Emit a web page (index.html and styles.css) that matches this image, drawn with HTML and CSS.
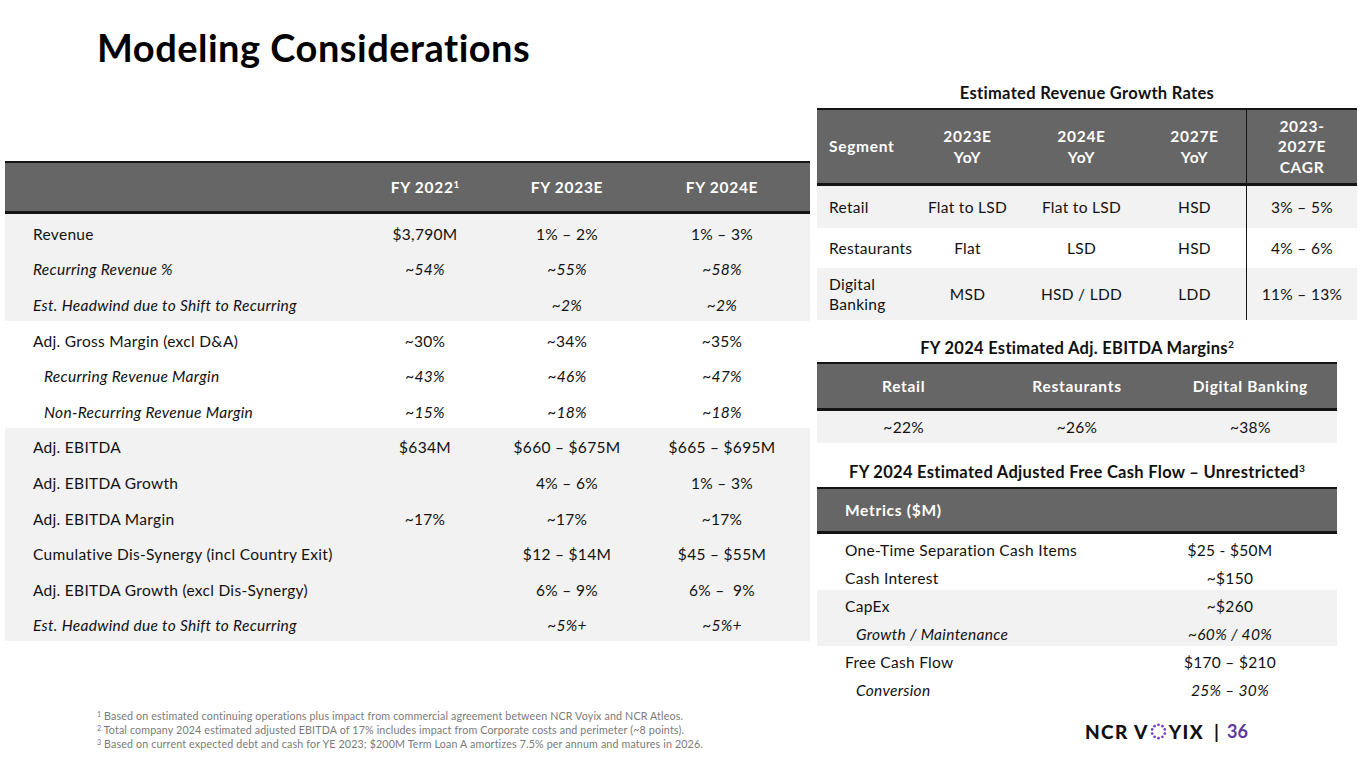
FILE: index.html
```html
<!DOCTYPE html>
<html lang="en">
<head>
<meta charset="utf-8">
<title>Modeling Considerations</title>
<link rel="stylesheet" href="styles.css">
</head>
<body>
<div class="slide">
  <h1 class="title">Modeling Considerations</h1>
  <div class="content">
    <div class="left">
      <table class="main">
        <colgroup><col class="c-label"><col class="c1"><col class="c2"><col class="c3"></colgroup>
        <thead>
          <tr><th></th><th>FY 2022<sup>1</sup></th><th>FY 2023E</th><th>FY 2024E</th></tr>
        </thead>
        <tbody>
          <tr class="g"><td class="lab">Revenue</td><td>$3,790M</td><td>1% – 2%</td><td>1% – 3%</td></tr>
          <tr class="g it"><td class="lab">Recurring Revenue %</td><td>~54%</td><td>~55%</td><td>~58%</td></tr>
          <tr class="g it"><td class="lab">Est. Headwind due to Shift to Recurring</td><td></td><td>~2%</td><td>~2%</td></tr>
          <tr><td class="lab">Adj. Gross Margin (excl D&amp;A)</td><td>~30%</td><td>~34%</td><td>~35%</td></tr>
          <tr class="it"><td class="lab ind">Recurring Revenue Margin</td><td>~43%</td><td>~46%</td><td>~47%</td></tr>
          <tr class="it"><td class="lab ind">Non-Recurring Revenue Margin</td><td>~15%</td><td>~18%</td><td>~18%</td></tr>
          <tr class="g"><td class="lab">Adj. EBITDA</td><td>$634M</td><td>$660 – $675M</td><td>$665 – $695M</td></tr>
          <tr class="g"><td class="lab">Adj. EBITDA Growth</td><td></td><td>4% – 6%</td><td>1% – 3%</td></tr>
          <tr class="g"><td class="lab">Adj. EBITDA Margin</td><td>~17%</td><td>~17%</td><td>~17%</td></tr>
          <tr class="g"><td class="lab">Cumulative Dis-Synergy (incl Country Exit)</td><td></td><td>$12 – $14M</td><td>$45 – $55M</td></tr>
          <tr class="g"><td class="lab">Adj. EBITDA Growth (excl Dis-Synergy)</td><td></td><td>6% – 9%</td><td>6% –&nbsp; 9%</td></tr>
          <tr class="g it"><td class="lab">Est. Headwind due to Shift to Recurring</td><td></td><td>~5%+</td><td>~5%+</td></tr>
        </tbody>
      </table>
    </div>
    <div class="right">
      <div class="cap cap1">Estimated Revenue Growth Rates</div>
      <table class="rev">
        <colgroup><col class="r0"><col class="r1"><col class="r2"><col class="r3"><col class="r4"></colgroup>
        <thead>
          <tr><th class="seg">Segment</th><th>2023E<br>YoY</th><th>2024E<br>YoY</th><th>2027E<br>YoY</th><th class="div">2023-<br>2027E<br>CAGR</th></tr>
        </thead>
        <tbody>
          <tr class="g h42"><td class="seg">Retail</td><td>Flat to LSD</td><td>Flat to LSD</td><td>HSD</td><td class="div">3% – 5%</td></tr>
          <tr class="h40"><td class="seg">Restaurants</td><td>Flat</td><td>LSD</td><td>HSD</td><td class="div">4% – 6%</td></tr>
          <tr class="g h52"><td class="seg">Digital<br>Banking</td><td>MSD</td><td>HSD / LDD</td><td>LDD</td><td class="div">11% – 13%</td></tr>
        </tbody>
      </table>
      <div class="cap cap2">FY 2024 Estimated Adj. EBITDA Margins<sup>2</sup></div>
      <table class="ebitda">
        <thead>
          <tr><th>Retail</th><th>Restaurants</th><th>Digital Banking</th></tr>
        </thead>
        <tbody>
          <tr class="g"><td>~22%</td><td>~26%</td><td>~38%</td></tr>
        </tbody>
      </table>
      <div class="cap cap3">FY 2024 Estimated Adjusted Free Cash Flow – Unrestricted<sup>3</sup></div>
      <table class="fcf">
        <colgroup><col class="f0"><col class="f1"></colgroup>
        <thead>
          <tr><th class="lab">Metrics ($M)</th><th></th></tr>
        </thead>
        <tbody>
          <tr><td class="lab">One-Time Separation Cash Items</td><td>$25 - $50M</td></tr>
          <tr><td class="lab">Cash Interest</td><td>~$150</td></tr>
          <tr class="g"><td class="lab">CapEx</td><td>~$260</td></tr>
          <tr class="g it"><td class="lab ind">Growth / Maintenance</td><td>~60% / 40%</td></tr>
          <tr><td class="lab">Free Cash Flow</td><td>$170 – $210</td></tr>
          <tr class="it"><td class="lab ind">Conversion</td><td>25% – 30%</td></tr>
        </tbody>
      </table>
    </div>
  </div>
  <div class="footer">
    <div class="notes">
      <p><sup>1</sup> Based on estimated continuing operations plus impact from commercial agreement between NCR Voyix and NCR Atleos.</p>
      <p><sup>2</sup> Total company 2024 estimated adjusted EBITDA of 17% includes impact from Corporate costs and perimeter (~8 points).</p>
      <p><sup>3</sup> Based on current expected debt and cash for YE 2023; $200M Term Loan A amortizes 7.5% per annum and matures in 2026.</p>
    </div>
    <div class="brand">
      <span class="logo">NCR V<svg class="ring" viewBox="0 0 20 20" width="17" height="17" aria-hidden="true"><g fill="#7a3fc7"><circle cx="10" cy="2.2" r="1.6"/><circle cx="14.6" cy="3.7" r="1.6"/><circle cx="17.4" cy="7.6" r="1.6"/><circle cx="17.4" cy="12.4" r="1.6"/><circle cx="14.6" cy="16.3" r="1.6"/><circle cx="10" cy="17.8" r="1.6"/><circle cx="5.4" cy="16.3" r="1.6"/><circle cx="2.6" cy="12.4" r="1.6"/><circle cx="2.6" cy="7.6" r="1.6"/><circle cx="5.4" cy="3.7" r="1.6"/></g></svg>YIX</span>
      <span class="bar">|</span>
      <span class="page">36</span>
    </div>
  </div>
</div>
</body>
</html>
```

FILE: styles.css
```css
* { box-sizing: border-box; }
html, body { margin: 0; padding: 0; background: #fff; }
body {
  font-family: Lato, "Open Sans", "Liberation Sans", sans-serif;
  color: #111;
  width: 1365px;
  height: 768px;
  overflow: hidden;
}
.slide { width: 1365px; height: 768px; display: flex; flex-direction: column; }
.title {
  margin: 25px 0 0 97px;
  font-size: 38px;
  line-height: 44px;
  font-weight: 700;
  color: #000;
  letter-spacing: 0.5px;
}
.content { display: flex; margin-top: 11px; }
.left { width: 805px; margin-left: 5px; padding-top: 81px; }
.right { width: 540px; margin-left: 7px; }

table { border-collapse: separate; border-spacing: 0; table-layout: fixed; font-size: 15.5px; letter-spacing: 0.3px; }
th { background: #666; color: #fff; font-weight: 700; padding: 0; border-top: 2px solid #141414; border-bottom: 3px solid #141414; text-align: center; letter-spacing: 0.7px; }
td { padding: 0; text-align: center; color: #111; }
tr.g td { background: #f2f2f2; }
tr.it td { font-style: italic; }
sup { font-size: 0.62em; line-height: 0; vertical-align: 0.55em; letter-spacing: 0; }

.main { width: 805px; }
.main col.c-label { width: 345px; }
.main col.c1 { width: 150px; }
.main col.c2 { width: 134px; }
.main col.c3 { width: 176px; }
.main th { height: 53px; font-size: 15.5px; }
.main tbody tr { height: 35.6px; }
.main td { padding-top: 4px; }
.main td.lab { text-align: left; padding-left: 28px; }
.main td.ind { padding-left: 39px; }

.cap { text-align: center; font-weight: 700; font-size: 16.5px; line-height: 24px; color: #111; letter-spacing: 0.3px; }
.cap1 { width: 540px; padding-top: 1px; padding-bottom: 3px; }
.cap2 { width: 520px; padding-top: 16px; padding-bottom: 2px; }
.cap3 { width: 520px; padding-top: 17px; padding-bottom: 3px; }

.rev { width: 540px; }
.rev col.r0 { width: 98px; }
.rev col.r1 { width: 105px; }
.rev col.r2 { width: 123px; }
.rev col.r3 { width: 103px; }
.rev col.r4 { width: 111px; }
.rev th { height: 78px; line-height: 20.5px; font-size: 15.5px; }
.rev .seg { text-align: left; padding-left: 12px; }
.rev .div { border-left: 1.5px solid #141414; }
.rev tr.h42 { height: 42px; }
.rev tr.h40 { height: 40px; }
.rev tr.h52 { height: 52px; }
.rev td { line-height: 20px; }

.ebitda { width: 520px; }
.ebitda th { height: 49px; }
.ebitda tbody tr { height: 32px; }

.fcf { width: 520px; }
.fcf col.f0 { width: 306px; }
.fcf col.f1 { width: 214px; }
.fcf th { height: 47px; }
.fcf th.lab { text-align: left; padding-left: 28px; }
.fcf tbody tr { height: 28px; }
.fcf td { padding-top: 3px; }
.fcf td.lab { text-align: left; padding-left: 28px; }
.fcf td.ind { padding-left: 39px; }

.footer { display: flex; align-items: flex-start; margin-top: 7px; }
.notes { margin-left: 97px; width: 660px; }
.notes p { margin: 0; font-size: 10.7px; line-height: 14px; color: #7a7a7a; white-space: nowrap; letter-spacing: 0.15px; }
.notes sup { font-size: 7px; vertical-align: 3px; }
.brand { display: flex; align-items: center; margin-left: 328px; margin-top: 12px; height: 20px; }
.logo { font-weight: 900; font-size: 19px; color: #111; display: flex; align-items: center; letter-spacing: 1.4px; }
.ring { margin: 0 2px 0 1px; }
.bar { font-weight: 700; font-size: 19px; margin: 0 8px 0 10px; color: #111; }
.page { font-weight: 700; font-size: 18px; color: #5c3aa0; }
```
